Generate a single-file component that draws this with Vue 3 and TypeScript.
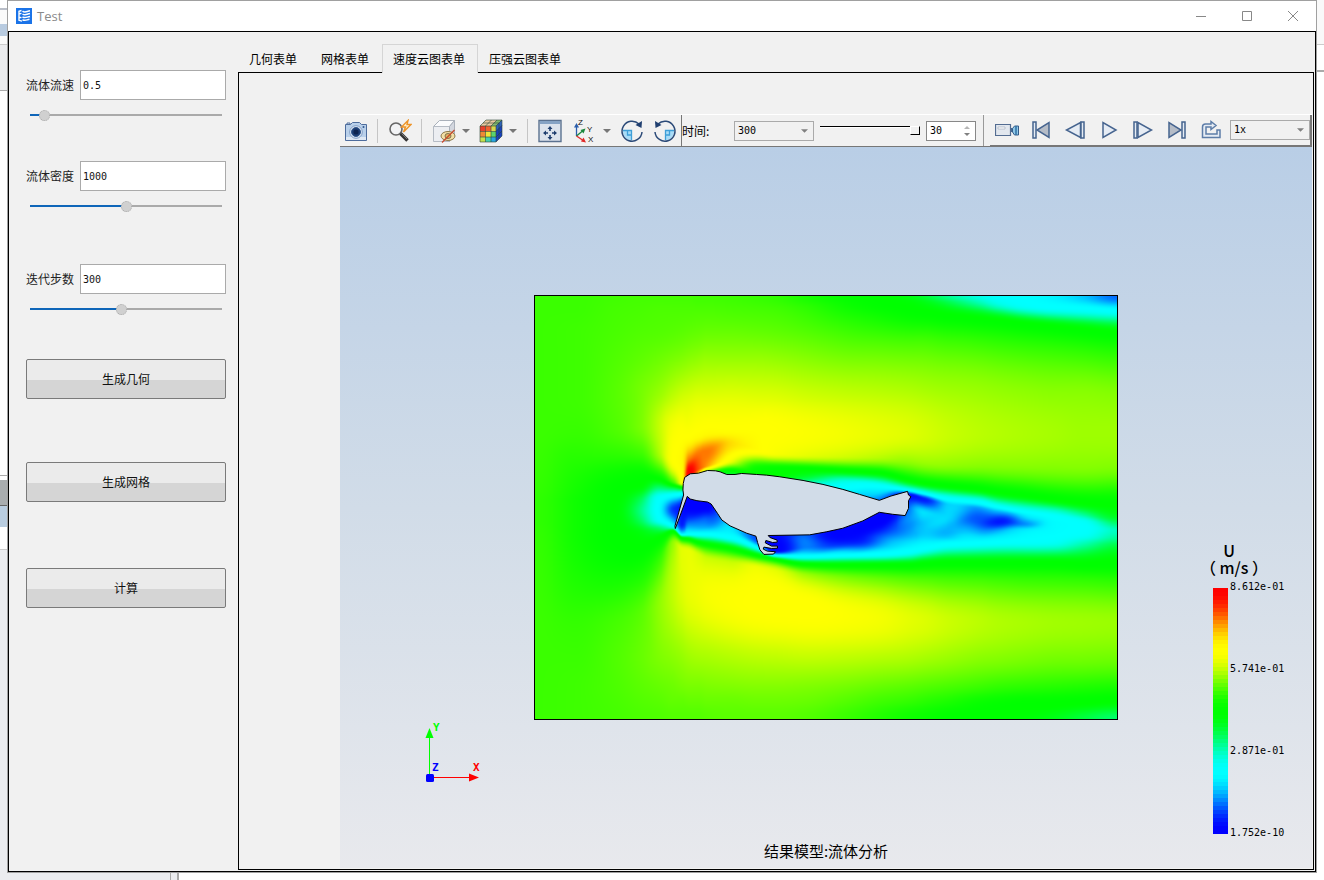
<script setup lang="ts">
import { onMounted, reactive, ref } from 'vue'

interface Field {
  id: string
  label: string
  value: string
  max: number
  step: number
}

const fields = reactive<Field[]>([
  { id: 'speed', label: '流体流速', value: '0.5', max: 10, step: 0.1 },
  { id: 'density', label: '流体密度', value: '1000', max: 2000, step: 1 },
  { id: 'steps', label: '迭代步数', value: '300', max: 630, step: 1 },
])
const actions = ['生成几何', '生成网格', '计算']
const tabs = ['几何表单', '网格表单', '速度云图表单', '压强云图表单']
const activeTab = ref(2)
const time = ref('300')
const frame = ref(30)
const rate = ref('1x')
const legend = ['8.612e-01', '5.741e-01', '2.871e-01', '1.752e-10']

const fill = (f: Field) => `${Math.min(100, Math.max(0, (Number(f.value) / f.max) * 100))}%`

/* Rainbow scale: 0 blue, 1 cyan, 2 green, 3 yellow, 4 red. */
const stops = [[0, 0, 255], [0, 255, 255], [0, 255, 0], [255, 255, 0], [255, 0, 0]]
function rainbow(v: number): number[] {
  const c = Math.min(3.9999, Math.max(0, v))
  const i = Math.floor(c)
  const t = c - i
  const s = t * t * (3 - 2 * t)
  return stops[i].map((a, k) => Math.round(a + (stops[i + 1][k] - a) * s))
}
const bands = Array.from({ length: 62 }, (_, i) => `rgb(${rainbow(4 * (1 - i / 61)).join(',')})`)

/* Velocity mesh: each station holds x, node heights from top to bottom, and node speeds. */
type Station = [number, number[], number[]]
const mesh: Station[] = [
  [0, [0, 13, 35, 62, 100, 135, 160, 180, 195, 205, 215, 225, 237, 260, 290, 330, 365, 392, 406, 424],
    [2.31, 2.31, 2.31, 2.31, 2.31, 2.31, 2.3, 2.29, 2.28, 2.27, 2.27, 2.27, 2.28, 2.29, 2.3, 2.31, 2.31, 2.31, 2.31, 2.31]],
  [40, [0, 13, 35, 62, 100, 135, 160, 180, 195, 205, 215, 225, 237, 260, 290, 330, 365, 392, 406, 424],
    [2.31, 2.31, 2.32, 2.32, 2.32, 2.3, 2.25, 2.2, 2.17, 2.15, 2.15, 2.15, 2.15, 2.17, 2.22, 2.29, 2.31, 2.32, 2.32, 2.32]],
  [80, [0, 13, 35, 62, 98, 132, 158, 178, 192, 205, 215, 225, 237, 258, 286, 328, 365, 392, 406, 424],
    [2.33, 2.34, 2.35, 2.37, 2.39, 2.37, 2.27, 2.12, 2.03, 1.98, 1.96, 1.97, 1.99, 2.05, 2.18, 2.34, 2.37, 2.36, 2.35, 2.34]],
  [105, [0, 13, 35, 62, 95, 128, 157, 176, 190, 205, 215, 225, 237, 253, 280, 322, 362, 392, 406, 424],
    [2.34, 2.35, 2.37, 2.41, 2.47, 2.48, 2.32, 2.1, 1.95, 1.6, 1.5, 1.6, 1.87, 2, 2.2, 2.4, 2.43, 2.4, 2.38, 2.36]],
  [125, [0, 13, 35, 62, 98, 130, 156, 180, 192, 203, 214, 224, 233, 243, 266, 310, 360, 392, 406, 424],
    [2.34, 2.36, 2.38, 2.45, 2.57, 2.7, 2.64, 2.15, 1.55, 1.02, 0.9, 1.02, 1.55, 2, 2.32, 2.55, 2.5, 2.43, 2.4, 2.37]],
  [138, [0, 13, 35, 62, 100, 134, 163, 186, 193, 201, 214, 226, 232, 236, 248, 295, 358, 392, 406, 424],
    [2.34, 2.36, 2.39, 2.48, 2.67, 2.9, 2.98, 2.35, 1.6, 0.9, 0.3, 0.7, 1.2, 2, 2.56, 2.68, 2.54, 2.45, 2.42, 2.38]],
  [147, [0, 13, 35, 62, 103, 138, 166, 187, 192, 198, 212, 228, 238, 243, 254, 292, 358, 392, 406, 424],
    [2.34, 2.36, 2.4, 2.5, 2.74, 2.98, 3.1, 2.95, 2, 1, 0.15, 0.2, 0.8, 2, 2.8, 2.78, 2.57, 2.47, 2.42, 2.38]],
  [154, [0, 13, 35, 62, 104, 140, 163, 177, 183, 195, 206, 228, 238, 244, 256, 292, 358, 392, 406, 424],
    [2.34, 2.36, 2.41, 2.52, 2.77, 3, 3.5, 4, 3.8, 0.6, 0, 0.45, 0.95, 2, 2.82, 2.83, 2.6, 2.48, 2.43, 2.38]],
  [163, [0, 13, 35, 62, 104, 140, 158, 173, 179, 186, 207, 226, 238, 247, 260, 295, 358, 392, 406, 424],
    [2.33, 2.36, 2.42, 2.54, 2.8, 3.06, 3.52, 3.65, 3.1, 2, 0, 0.42, 0.95, 2, 2.76, 2.86, 2.62, 2.48, 2.43, 2.38]],
  [172, [0, 13, 35, 62, 105, 138, 156, 170, 175, 178, 208, 224, 238, 249, 264, 298, 358, 392, 406, 424],
    [2.33, 2.36, 2.43, 2.56, 2.81, 3.08, 3.52, 3.42, 2.6, 2, 0, 0.42, 0.95, 2, 2.72, 2.9, 2.63, 2.49, 2.44, 2.39]],
  [195, [0, 13, 35, 62, 105, 134, 148, 165, 175, 180, 215, 231, 241, 253, 268, 304, 358, 392, 406, 424],
    [2.32, 2.35, 2.43, 2.56, 2.82, 3.02, 3.24, 2.9, 2, 1.6, 0.7, 0.8, 0.98, 2, 2.72, 2.95, 2.66, 2.5, 2.44, 2.4]],
  [222, [0, 13, 35, 62, 104, 132, 152, 171, 180, 184, 234, 245, 252, 260, 273, 308, 358, 392, 406, 424],
    [2.3, 2.34, 2.42, 2.56, 2.8, 3, 3.06, 2.15, 1.97, 1.5, 0.3, 0.4, 1, 2, 2.86, 3, 2.69, 2.51, 2.45, 2.4]],
  [240, [0, 13, 35, 62, 102, 134, 157, 172, 181, 185, 240, 255, 260, 264, 276, 308, 358, 392, 406, 424],
    [2.28, 2.33, 2.41, 2.55, 2.78, 2.98, 2.92, 2.08, 1.92, 1.5, 0.1, 0.1, 1, 2, 2.82, 3.02, 2.7, 2.51, 2.45, 2.4]],
  [270, [0, 11, 33, 60, 100, 137, 159, 173, 183, 190, 238, 251, 261, 269, 280, 312, 359, 392, 406, 424],
    [2.2, 2.27, 2.37, 2.51, 2.73, 2.93, 2.82, 2.03, 1.65, 1.1, 0.4, 0.45, 1, 2, 2.6, 3.01, 2.71, 2.5, 2.44, 2.38]],
  [310, [0, 8, 27, 55, 97, 138, 160, 175, 186, 196, 236, 248, 260, 270, 283, 320, 360, 392, 406, 424],
    [2.08, 2.13, 2.27, 2.44, 2.68, 2.87, 2.74, 2, 1.2, 0.9, 0.02, 0.22, 1, 2, 2.5, 2.94, 2.69, 2.47, 2.39, 2.31]],
  [345, [0, 6, 20, 48, 93, 138, 161, 177, 190, 203, 222, 242, 259, 270, 285, 323, 361, 392, 406, 424],
    [2, 2.02, 2.15, 2.38, 2.64, 2.82, 2.66, 2, 1.05, 0.5, 0, 0.35, 1.02, 2, 2.46, 2.88, 2.66, 2.43, 2.33, 2.23]],
  [375, [0, 6, 18, 46, 91, 138, 164, 184, 194, 200, 214, 238, 256, 270, 286, 325, 362, 392, 406, 424],
    [1.85, 1.93, 2.06, 2.35, 2.61, 2.78, 2.58, 2, 1.1, 0.1, 0.5, 0.65, 1.02, 2, 2.42, 2.8, 2.63, 2.4, 2.29, 2.15]],
  [390, [0, 6, 18, 45, 90, 138, 166, 187, 197, 204, 218, 234, 252, 269, 286, 326, 362, 392, 406, 424],
    [1.72, 1.84, 2.03, 2.34, 2.59, 2.75, 2.58, 2, 1.1, 0.2, 0.8, 0.68, 0.98, 2, 2.4, 2.77, 2.61, 2.38, 2.26, 2.12]],
  [415, [0, 6, 20, 46, 90, 138, 168, 190, 203, 210, 222, 236, 248, 268, 287, 327, 363, 392, 408, 424],
    [1.46, 1.64, 2, 2.32, 2.57, 2.7, 2.56, 2, 1.06, 0.72, 0.68, 0.64, 0.97, 2, 2.38, 2.71, 2.57, 2.35, 2.19, 2.05]],
  [445, [0, 5, 23, 49, 92, 138, 168, 193, 206, 214, 226, 236, 247, 268, 287, 327, 363, 392, 411, 424],
    [1.2, 1.33, 2, 2.32, 2.56, 2.66, 2.54, 2, 1.06, 0.6, 0.35, 0.62, 0.98, 2, 2.36, 2.66, 2.53, 2.31, 2.08, 2]],
  [465, [0, 6, 25, 52, 94, 138, 169, 196, 210, 217, 226, 236, 246, 268, 288, 328, 364, 392, 412, 424],
    [1.06, 1.15, 2, 2.32, 2.55, 2.64, 2.53, 2, 1.12, 0.6, 0.25, 0.68, 0.98, 2, 2.35, 2.63, 2.51, 2.28, 2.03, 1.97]],
  [490, [0, 8, 28, 55, 96, 138, 169, 199, 213, 220, 228, 235, 245, 268, 288, 328, 364, 392, 411, 424],
    [0.98, 1.05, 2, 2.32, 2.54, 2.62, 2.53, 2, 1.2, 0.8, 0.5, 0.85, 1, 2, 2.33, 2.61, 2.49, 2.26, 2, 1.92]],
  [520, [0, 10, 31, 58, 98, 138, 170, 203, 216, 222, 229, 236, 246, 268, 288, 328, 364, 392, 409, 424],
    [0.87, 1, 2, 2.32, 2.53, 2.6, 2.52, 2, 1.25, 1, 0.93, 0.95, 1.08, 2, 2.32, 2.59, 2.47, 2.24, 2, 1.82]],
  [550, [0, 12, 34, 61, 99, 138, 170, 206, 219, 226, 232, 238, 248, 269, 288, 328, 365, 392, 407, 424],
    [0.7, 1, 2, 2.32, 2.53, 2.58, 2.52, 2, 1.45, 1.1, 1.02, 1.06, 1.35, 2, 2.31, 2.58, 2.46, 2.22, 2, 1.68]],
  [584, [0, 14, 37, 65, 100, 138, 170, 208, 222, 229, 235, 242, 250, 268, 289, 328, 365, 392, 406, 425],
    [0.45, 1, 2, 2.32, 2.52, 2.58, 2.51, 2, 1.75, 1.5, 1.32, 1.42, 1.65, 2, 2.3, 2.57, 2.45, 2.2, 1.98, 1.55]],
]

/* Monotone cubic interpolation through (xs, ys). */
function curve(xs: number[], ys: number[]): (x: number) => number {
  const n = xs.length
  const d = xs.slice(1).map((x, i) => (ys[i + 1] - ys[i]) / (x - xs[i]))
  const m = ys.map((_, i) => {
    if (i === 0 || i === n - 1) return 0
    return d[i - 1] * d[i] <= 0 ? 0 : (2 * d[i - 1] * d[i]) / (d[i - 1] + d[i])
  })
  return (x) => {
    let i = 0
    while (i < n - 2 && x > xs[i + 1]) i++
    const h = xs[i + 1] - xs[i]
    const t = (x - xs[i]) / h
    const t2 = t * t
    const t3 = t2 * t
    return (2 * t3 - 3 * t2 + 1) * ys[i] + (t3 - 2 * t2 + t) * h * m[i]
      + (3 * t2 - 2 * t3) * ys[i + 1] + (t3 - t2) * h * m[i + 1]
  }
}

const plot = ref<HTMLCanvasElement | null>(null)
onMounted(() => {
  const canvas = plot.value
  const ctx = canvas?.getContext('2d')
  if (!canvas || !ctx) return
  const { width, height } = canvas
  const image = ctx.createImageData(width, height)
  const xs = mesh.map((s) => s[0])
  const rows = mesh[0][1].map((_, r) => ({
    y: curve(xs, mesh.map((s) => s[1][r])),
    v: curve(xs, mesh.map((s) => s[2][r])),
  }))
  for (let x = 0; x < width; x++) {
    const column = curve(rows.map((r) => r.y(x)), rows.map((r) => r.v(x)))
    for (let y = 0; y < height; y++) {
      let v = column(y)
      /* small eddies inside the wake */
      if (v < 0.95 && x > 150 && y > 150) {
        v += 0.07 * Math.min(1, 4 * (0.95 - v)) * Math.sin(x / 9 + Math.sin(y / 6)) * Math.sin(y / 8 + x / 23)
      }
      const [r, g, b] = rainbow(v)
      const p = (y * width + x) * 4
      image.data[p] = r
      image.data[p + 1] = g
      image.data[p + 2] = b
      image.data[p + 3] = 255
    }
  }
  ctx.putImageData(image, 0, 0)
})
</script>

<template>
  <div class="desktop">
    <div class="behind-left"></div>
    <div class="behind-right"></div>
    <div class="behind-bottom"></div>

    <div class="window">
      <header class="titlebar">
        <svg class="logo" viewBox="0 0 16 16" aria-hidden="true">
          <rect width="16" height="16" fill="#1a73e8" />
          <path d="M5.500 2.500 3 3.300v9l3 .9M3 6l2.500-.6M3 9.300l2.500.3" fill="none" stroke="#fff" stroke-width="1.400" />
          <path d="M6.500 3.200c2.500 1.800 4 .2 7.500-.4M6.500 6c2.500 1.800 4 .2 7.500-.4M6.500 8.800c2.500 1.800 4 .2 7.500-.4M6.500 11.600c2.500 1.800 4 .2 7-.4" fill="none" stroke="#fff" stroke-width="1.500" />
        </svg>
        <span class="title">Test</span>
        <div class="win-buttons">
          <button type="button" aria-label="最小化"><svg viewBox="0 0 12 12"><path d="M1 6.500h10" /></svg></button>
          <button type="button" aria-label="最大化"><svg viewBox="0 0 12 12"><path d="M1.500 1.500h9v9h-9z" /></svg></button>
          <button type="button" aria-label="关闭"><svg viewBox="0 0 12 12"><path d="m1 1 10 10M11 1 1 11" /></svg></button>
        </div>
      </header>

      <div class="body">
        <aside class="sidebar">
          <div v-for="f in fields" :key="f.id" class="field">
            <div class="field-row">
              <label :for="f.id">{{ f.label }}</label>
              <input :id="f.id" v-model="f.value" type="text" />
            </div>
            <input
              v-model="f.value" class="range" type="range" min="0" :max="f.max" :step="f.step"
              :aria-label="f.label" :style="{ '--fill': fill(f) }"
            />
          </div>
          <button v-for="a in actions" :key="a" type="button" class="action">{{ a }}</button>
        </aside>

        <main class="main">
          <nav class="tabs" role="tablist">
            <button
              v-for="(t, i) in tabs" :key="t" type="button" role="tab" class="tab"
              :class="{ active: i === activeTab }" :aria-selected="i === activeTab" @click="activeTab = i"
            >{{ t }}</button>
          </nav>

          <section class="page">
            <div class="toolbars">
              <div class="tools">
                <button type="button" class="tool" aria-label="截图">
                  <svg viewBox="0 0 24 24">
                    <path d="M1.500 5.500h5l2-2h7l2 2h5v16h-21z" fill="#b9d0ea" stroke="#4d6c9c" />
                    <path d="M2 18h20v3H2z" fill="#dfe8f3" /><path d="M3 5.500V4h3v1.500" fill="none" stroke="#4d6c9c" />
                    <circle cx="12" cy="13" r="6.300" fill="#e7eef7" stroke="#7f9cc4" />
                    <circle cx="12" cy="13" r="4.500" fill="#1e3d72" stroke="#31588f" /><circle cx="12" cy="13" r="2.500" fill="#0e2450" />
                    <circle cx="19.500" cy="8" r="1" fill="#31588f" />
                  </svg>
                </button>
                <i class="sep"></i>
                <button type="button" class="tool" aria-label="快速缩放">
                  <svg viewBox="0 0 24 24">
                    <circle cx="8" cy="10" r="6" fill="#f2f3f5" stroke="#666" stroke-width="1.600" />
                    <path d="m12.500 14.500 7 7" stroke="#333" stroke-width="3.500" /><path d="m13.500 14.500 5.500 5.500" stroke="#777" />
                    <path d="M20 1.500 13.500 8h4l-2 5 7.500-7.500h-4z" fill="#fff1cf" stroke="#ed9328" stroke-width="1.400" />
                  </svg>
                </button>
                <i class="sep"></i>
                <div class="split">
                  <button type="button" class="tool" aria-label="显示隐藏">
                    <svg viewBox="0 0 24 24">
                      <path d="m1.500 7.500 6-6h15l-5 6z" fill="#fafbfd" stroke="#a9b0ba" /><path d="M1.500 7.500h16v15h-16z" fill="#eceef2" stroke="#b5bbc4" />
                      <path d="m17.500 7.500 5-6v14l-5 7z" fill="#d3d7df" stroke="#a9b0ba" />
                      <ellipse cx="16" cy="17" rx="7" ry="4.500" fill="#f3dfa6" stroke="#8d7848" /><ellipse cx="16" cy="17" rx="3" ry="2.500" fill="#e0b45d" stroke="#7d7455" />
                      <path d="M10 23.500 22.500 11" stroke="#c8482b" stroke-width="1.300" />
                    </svg>
                  </button>
                  <button type="button" class="caret" aria-label="显示选项"><svg viewBox="0 0 8 4"><path d="M0 0h8L4 4z" /></svg></button>
                </div>
                <div class="split">
                  <button type="button" class="tool" aria-label="云图">
                    <svg viewBox="0 0 24 24">
                      <path d="m1 7 6-6h16l-6 6z" fill="#e9c9a0" /><path d="m12 7 6-6h5l-6 6z" fill="#83b86f" />
                      <path d="m17 7 6-6v16l-6 6z" fill="#1941be" /><path d="m17 7 6-6v5l-6 6z" fill="#2d62b8" />
                      <path d="M1 7h5.500v5.500H1z" fill="#e8402c" /><path d="M6.500 7H12v5.500H6.500z" fill="#f0602f" /><path d="M12 7h5v5.500h-5z" fill="#d9d54d" />
                      <path d="M1 12.500h5.500V18H1z" fill="#f08a35" /><path d="M6.500 12.500H12V18H6.500z" fill="#f0e53a" /><path d="M12 12.500h5V18h-5z" fill="#5bd36b" />
                      <path d="M1 18h5.500v5H1z" fill="#c4e04b" /><path d="M6.500 18H12v5H6.500z" fill="#45cfae" /><path d="M12 18h5v5h-5z" fill="#27a6e1" />
                      <path d="M1 7h16v16H1zM6.500 7v16M12 7v16M1 12.500h16M1 18h16M1 7l6-6h16v16l-6 6M6.500 7l6-6M12 7l6-6M17 7l6-6M4 4h16v16M17 12.500l6-6M17 18l6-6" fill="none" stroke="#2b4434" stroke-width=".6" />
                    </svg>
                  </button>
                  <button type="button" class="caret" aria-label="云图选项"><svg viewBox="0 0 8 4"><path d="M0 0h8L4 4z" /></svg></button>
                </div>
                <i class="sep"></i>
                <button type="button" class="tool" aria-label="适应窗口">
                  <svg viewBox="0 0 24 24">
                    <path d="M1 1.500h22v21H1z" fill="#dce3ec" stroke="#5b7290" stroke-width="1.400" /><path d="M2 2h20v3H2z" fill="#86a3c4" />
                    <path d="M12 7 9.500 10h5zM12 21 9.500 18h5zM5 14l3-2.500v5zM19 14l-3-2.500v5z" fill="#1f3e6e" />
                    <path d="M12 9v3M12 16v3M7 14h3M14 14h3" stroke="#1f3e6e" stroke-width="1.600" />
                  </svg>
                </button>
                <div class="split">
                  <button type="button" class="tool" aria-label="视图方向">
                    <svg viewBox="0 0 24 24">
                      <path d="M3.500 17V7" stroke="#2b5dab" stroke-width="1.300" /><path d="M3.500 4 1 8.500h5z" fill="#2b5dab" />
                      <path d="m3.500 17 6-5" stroke="#19873c" stroke-width="1.300" /><path d="m12.500 9.500-5 1.500 3 3.500z" fill="#19873c" />
                      <path d="m3.500 17 6 4" stroke="#e02828" stroke-width="1.300" /><path d="M13 23.500 10.500 18.500 8 22.500z" fill="#e02828" />
                      <text x="5" y="6" class="axis-mini">Z</text><text x="14" y="13" class="axis-mini">Y</text><text x="15" y="23" class="axis-mini">X</text>
                    </svg>
                  </button>
                  <button type="button" class="caret" aria-label="视图选项"><svg viewBox="0 0 8 4"><path d="M0 0h8L4 4z" /></svg></button>
                </div>
                <button type="button" class="tool" aria-label="顺时针旋转">
                  <svg viewBox="0 0 24 24">
                    <path d="M3 12h9v9.500c-5 0-9-4-9-9.500z" fill="#a9dcf7" /><path d="M3 11.500h8.500V21M7.500 12v4H11" fill="none" stroke="#3e9fd8" stroke-width="1.300" />
                    <path d="M19 5A10 10 0 1 0 22 13" fill="none" stroke="#2b4a78" stroke-width="1.500" /><path d="m22 2-.5 7-6-3z" fill="#203f70" />
                  </svg>
                </button>
                <button type="button" class="tool" aria-label="逆时针旋转">
                  <svg viewBox="0 0 24 24">
                    <path d="M21 12h-9v9.500c5 0 9-4 9-9.500z" fill="#a9dcf7" /><path d="M21 11.500h-8.500V21M16.500 12v4H13" fill="none" stroke="#3e9fd8" stroke-width="1.300" />
                    <path d="M5 5A10 10 0 1 1 2 13" fill="none" stroke="#2b4a78" stroke-width="1.500" /><path d="m2 2 .5 7 6-3z" fill="#203f70" />
                  </svg>
                </button>
              </div>

              <div class="timebar">
                <label for="time">时间:</label>
                <div class="combo">
                  <select id="time" v-model="time"><option>300</option></select>
                  <svg viewBox="0 0 8 4"><path d="M0 0h8L4 4z" /></svg>
                </div>
                <input v-model.number="frame" class="frame-range" type="range" min="0" max="30" aria-label="帧" />
                <div class="combo spin">
                  <input v-model.number="frame" type="number" min="0" max="30" aria-label="帧数" />
                  <svg viewBox="0 0 6 12"><path d="M3 1 6 4H0z" fill="#b5b5b5" /><path d="m3 11 3-3H0z" /></svg>
                </div>
              </div>

              <div class="player">
                <button type="button" class="tool" aria-label="录像">
                  <svg viewBox="0 0 24 24">
                    <path d="M.5 6.500h15v11H.5z" fill="#e2e7ee" stroke="#536c91" stroke-width="1.200" /><path d="M3 9h7v2H3z" fill="#fff" stroke="#a6afbd" stroke-width=".7" />
                    <path d="M16 10h2v4h-2z" fill="#456891" /><path d="m17.500 10.500 2-2.500h4v9h-4l-2-3z" fill="#8fc8e8" stroke="#365c89" /><path d="M21 8v9" stroke="#2f6fa3" stroke-width="1.500" />
                  </svg>
                </button>
                <button type="button" class="tool" aria-label="首帧">
                  <svg viewBox="0 0 24 24"><path d="M4 4h3v16H4z" class="play" /><path d="M20 4.500v15L8 12z" class="play dark" /></svg>
                </button>
                <button type="button" class="tool" aria-label="上一帧">
                  <svg viewBox="0 0 24 24"><path d="M17.500 4.500v15L3.500 12z" class="play" /><path d="M18 4h3v16h-3z" class="play" /></svg>
                </button>
                <button type="button" class="tool" aria-label="播放">
                  <svg viewBox="0 0 24 24"><path d="M6 4.500v15L19 12z" class="play" /></svg>
                </button>
                <button type="button" class="tool" aria-label="下一帧">
                  <svg viewBox="0 0 24 24"><path d="M3 4h3v16H3z" class="play" /><path d="M7 4.500v15L20.500 12z" class="play" /></svg>
                </button>
                <button type="button" class="tool" aria-label="末帧">
                  <svg viewBox="0 0 24 24"><path d="M4 4.500v15L16 12z" class="play dark" /><path d="M17 4h3v16h-3z" class="play" /></svg>
                </button>
                <button type="button" class="tool" aria-label="循环">
                  <svg viewBox="0 0 24 24"><path d="M3.500 19.500V9c0-2 1-3 3-3H12V3.500l5 4-5 4V9H7v7h11v-4h3v7.500z" class="play loop" /></svg>
                </button>
                <div class="combo rate">
                  <select v-model="rate" aria-label="播放速度"><option>1x</option></select>
                  <svg viewBox="0 0 8 4"><path d="M0 0h8L4 4z" /></svg>
                </div>
              </div>
            </div>

            <div class="viewport">
              <div class="plot">
                <canvas ref="plot" width="584" height="425"></canvas>
                <svg viewBox="0 0 1752 1275" aria-hidden="true">
                  <g transform="translate(288 435)">
                    <path
                      d="M159 130 163 112 180 101 205 99 232 91 256 92 270 95 290 103 315 103 335 100 380 103 410 105 450 110 520 121 580 133 640 148 690 163 750 181 785 168 835 154 838 165 845 170 838 182 838 205 828 227 790 223 750 217 700 243 640 265 590 276 540 285 415 287 420 293 442 301 442 307 428 308 408 302 406 309 425 319 443 319 443 325 425 326 402 322 400 328 412 334 437 336 431 343 402 344 390 330 383 308 378 289 350 280 300 258 275 240 262 220 243 192 232 186 200 182 180 177 171 169 135 266 134 258 160 165 158 150z"
                    />
                  </g>
                </svg>
              </div>

              <svg class="triad" viewBox="0 0 60 64" role="img" aria-label="坐标轴">
                <path d="M7.500 56V16" stroke="#0f0" /><path d="m7.500 7-4 10h8z" fill="#0f0" />
                <path d="M7 56.500h42" stroke="#f00" /><path d="m57 56.500-10-4v8z" fill="#f00" />
                <rect x="4" y="53" width="8" height="8" rx="1.500" fill="#00f" />
                <text x="11" y="10" fill="#0f0">Y</text><text x="10" y="50" fill="#00f">Z</text><text x="51" y="50" fill="#f00">X</text>
              </svg>

              <div class="legend">
                <div class="legend-name">U</div>
                <div class="legend-unit">（ m/s ）</div>
                <div class="scale">
                  <div class="bar"><i v-for="(b, i) in bands" :key="i" :style="{ background: b }"></i></div>
                  <div class="ticks"><span v-for="l in legend" :key="l">{{ l }}</span></div>
                </div>
              </div>

              <p class="caption">结果模型:流体分析</p>
            </div>
          </section>
        </main>
      </div>
    </div>
  </div>
</template>

<style>
body {
  margin: 0;
}
</style>

<style scoped>
* {
  box-sizing: border-box;
}
.desktop {
  position: relative;
  height: 100vh;
  min-height: 720px;
  padding: 0 7px 7px;
  background: #fff;
  font: 12px/16px "Noto Sans CJK SC", sans-serif;
  color: #000;
  overflow: hidden;
}
.behind-left,
.behind-right,
.behind-bottom {
  position: absolute;
}
.behind-left {
  inset: 0 auto 0 0;
  width: 7px;
  background: linear-gradient(
    #fff 8px, #b9bec8 8px 10px, #fafafa 10px 24px, #b8cbe0 24px 36px, #fafafa 36px 44px, #ccc 44px 45px, #ebecee 45px 90px, #aaa 90px 91px,
    #fff 91px 475px, #aaa 475px 476px, #fff 476px 480px, #a9adaf 480px 505px, #666 505px 506px,
    #b9cde0 506px 527px, #fff 527px 549px, #ccc 549px 550px, #ebecef 550px
  );
}
.behind-right {
  inset: 0 0 0 auto;
  width: 7px;
  background: linear-gradient(#f9f9f9 44px, #ccc 44px 45px, #fff 45px 70px, #aaa 70px 72px, #fff 72px);
}
.behind-bottom {
  inset: auto 0 0 0;
  height: 7px;
  background: linear-gradient(90deg, #ebecef 170px, #aaa 170px 171px, #ebecef 171px 177px, #aaa 177px 179px, #fff 179px);
}
.window {
  position: relative;
  display: flex;
  flex-direction: column;
  height: 100%;
  border: 1px solid #a0a0a0;
  background: #f1f1f1;
}
.titlebar {
  display: flex;
  align-items: center;
  height: 30px;
  flex: none;
  padding-left: 8px;
  background: #fff;
}
.logo {
  width: 16px;
  height: 16px;
}
.title {
  margin-left: 5px;
  font-family: "Open Sans", sans-serif;
  font-size: 13px;
  color: #8a8a8a;
}
.win-buttons {
  display: flex;
  margin-left: auto;
}
.win-buttons button {
  display: grid;
  place-items: center;
  width: 46px;
  height: 28px;
  padding: 0;
  border: 0;
  background: none;
}
.win-buttons svg {
  width: 12px;
  height: 12px;
  fill: none;
  stroke: #888;
}
.body {
  display: flex;
  flex: 1;
  min-height: 0;
  border: 1px solid #000;
}
.sidebar {
  display: grid;
  grid-template-rows: 91px 103px 95px 103px 106px 40px;
  width: 229px;
  flex: none;
  padding: 38px 12px 0 17px;
}
.field-row {
  display: flex;
  align-items: center;
  justify-content: space-between;
}
.field-row label {
  color: #222;
}
.field-row input {
  width: 146px;
  height: 30px;
  padding: 0 2px;
  border: 1px solid #aaa;
  background: #fff;
  font: 10px/16px "DejaVu Sans Mono", monospace;
  color: #111;
}
.range {
  display: block;
  appearance: none;
  width: 192px;
  height: 20px;
  margin: 5px 4px 0;
  background: linear-gradient(90deg, #0f66b9 var(--fill), #aaa var(--fill)) center / 100% 2px no-repeat;
}
.range::-webkit-slider-thumb {
  appearance: none;
  width: 11px;
  height: 11px;
  border: 1px dotted #aaa;
  border-radius: 50%;
  background: #d0d0d0;
}
.action {
  height: 40px;
  padding: 0;
  border: 1px solid #7a7a7a;
  border-radius: 2px;
  background: linear-gradient(#ebebeb 52%, #d5d5d5 52%);
  font: inherit;
  color: #111;
}
.main {
  display: flex;
  flex-direction: column;
  flex: 1;
  min-width: 0;
  padding: 12px 1px 1px 0;
}
.tabs {
  display: flex;
  height: 28px;
  flex: none;
}
.tab {
  padding: 0 12px 0 10px;
  border: 1px solid transparent;
  border-bottom: 0;
  background: none;
  font: inherit;
  color: #000;
}
.tab.active {
  height: 29px;
  padding-bottom: 1px;
  border-color: #d5d5d5;
  background: #f1f1f1;
  z-index: 1;
}
.page {
  display: flex;
  flex-direction: column;
  flex: 1;
  min-height: 0;
  padding: 41px 1px 1px 101px;
  border: 1px solid #000;
}
.toolbars {
  display: flex;
  height: 33px;
  flex: none;
  border-top: 1px solid #fff;
  border-bottom: 1px solid #777;
}
.tools,
.timebar,
.player {
  display: flex;
  align-items: center;
}
.tools {
  width: 342px;
  border-right: 1px solid #777;
}
.tool,
.caret {
  display: grid;
  place-items: center;
  height: 30px;
  padding: 0;
  border: 0;
  background: none;
}
.tool {
  width: 32px;
}
.tools .tool + .tool {
  margin-left: 1px;
}
.tool svg {
  width: 24px;
  height: 24px;
}
.caret {
  width: 12px;
}
.caret svg {
  width: 8px;
  height: 4px;
  fill: #777;
}
.sep {
  width: 1px;
  height: 24px;
  margin: 0 6px 0 5px;
  background: #c5c5c5;
}
.split {
  display: flex;
  margin-right: 3px;
}
.tool + .split {
  margin-left: 3px;
}
.axis-mini {
  font: 8px "Liberation Sans", sans-serif;
  fill: #111;
}
.timebar {
  flex: 1;
  min-width: 0;
  padding-right: 7px;
  border-right: 1px solid #999;
}
.timebar label {
  width: 52px;
}
.combo {
  display: grid;
  align-items: center;
  justify-items: end;
  width: 80px;
  height: 20px;
}
.combo > * {
  grid-area: 1 / 1;
}
.combo select,
.combo input {
  appearance: none;
  width: 100%;
  height: 20px;
  padding: 0 3px;
  border: 1px solid #aaa;
  border-radius: 0;
  background: #f1f1f1;
  font: 10px/16px "DejaVu Sans Mono", monospace;
  color: #000;
}
.combo svg {
  width: 7px;
  height: 4px;
  margin-right: 6px;
  fill: #808080;
  pointer-events: none;
}
.combo.spin {
  width: 50px;
}
.combo.spin input {
  border-color: #888;
  background: #fff;
  appearance: textfield;
}
.combo.spin input::-webkit-inner-spin-button {
  display: none;
}
.combo.spin svg {
  width: 6px;
  height: 12px;
}
.frame-range {
  appearance: none;
  flex: 1;
  min-width: 40px;
  height: 20px;
  margin: 0 6px;
  background: linear-gradient(#000 1px, #fff 1px) 0 5px / 100% 2px no-repeat;
}
.frame-range::-webkit-slider-thumb {
  appearance: none;
  width: 10px;
  height: 9px;
  border: 1px solid #fff;
  border-right-color: #000;
  border-bottom-color: #000;
  background: #f1f1f1;
}
.player {
  margin-left: 6px;
  border: solid #777;
  border-width: 0 2px 1px 0;
}
.player .tool {
  width: 34px;
}
.play {
  fill: #e6ecf4;
  stroke: #46648f;
  stroke-width: 1.5;
}
.play.dark {
  fill: #b5bcc7;
}
.play.loop {
  stroke: #5d7da8;
}
.combo.rate {
  margin-left: 2px;
}
.viewport {
  position: relative;
  display: grid;
  place-items: center;
  flex: 1;
  min-height: 0;
  background: linear-gradient(#b9cee6, #d1dce8 50%, #e8e9ed);
}
.plot {
  display: grid;
  width: 60%;
  border: 1px solid #000;
}
.plot > * {
  grid-area: 1 / 1;
  width: 100%;
  height: 100%;
}
.plot path {
  fill: #d1dce8;
  stroke: #000;
  stroke-width: 3;
}
.triad {
  position: absolute;
  left: 82px;
  bottom: 83px;
  width: 60px;
  height: 64px;
  overflow: visible;
}
.triad text {
  font: bold 11px "DejaVu Sans Mono", monospace;
}
.legend {
  position: absolute;
  right: 16px;
  bottom: 29px;
  width: 99px;
}
.legend-name,
.legend-unit {
  display: flex;
  width: 70px;
  justify-content: center;
  margin-left: 2px;
  font-size: 16px;
  line-height: 17px;
  font-weight: 500;
  white-space: pre;
}
.legend-name {
  width: 32px;
  margin-left: 16px;
}
.scale {
  display: flex;
  margin-top: 4px;
}
.bar {
  display: flex;
  flex-direction: column;
  width: 15px;
  height: 246px;
  margin: 8px 2px 5px 16px;
}
.bar i {
  flex: 1;
}
.ticks {
  display: flex;
  flex-direction: column;
  justify-content: space-between;
  padding-top: 1px;
  font: 10px/12px "DejaVu Sans Mono", monospace;
}
.caption {
  position: absolute;
  bottom: 7px;
  margin: 0;
  font-size: 15px;
  line-height: 20px;
}
</style>
